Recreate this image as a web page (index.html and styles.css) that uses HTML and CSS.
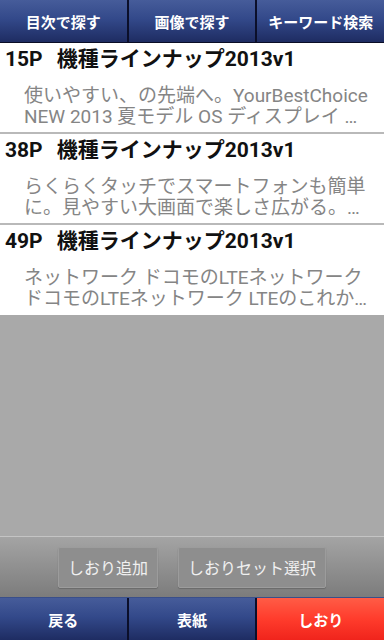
FILE: index.html
```html
<!DOCTYPE html>
<html lang="ja">
<head>
<meta charset="utf-8">
<link rel="stylesheet" href="styles.css">
</head>
<body>
<div class="screen">
  <nav class="topbar">
    <div class="tab">目次で探す</div>
    <div class="tab">画像で探す</div>
    <div class="tab">キーワード検索</div>
  </nav>
  <ul class="list">
    <li class="item">
      <div class="title"><span class="page">15P</span>機種ラインナップ2013v1</div>
      <div class="desc"><span class="line">使いやすい、の先端へ。YourBestChoice</span><span class="line">NEW 2013 夏モデル OS ディスプレイ …</span></div>
    </li>
    <li class="item">
      <div class="title"><span class="page">38P</span>機種ラインナップ2013v1</div>
      <div class="desc"><span class="line">らくらくタッチでスマートフォンも簡単</span><span class="line">に。見やすい大画面で楽しさ広がる。…</span></div>
    </li>
    <li class="item">
      <div class="title"><span class="page">49P</span>機種ラインナップ2013v1</div>
      <div class="desc"><span class="line">ネットワーク ドコモのLTEネットワーク</span><span class="line">ドコモのLTEネットワーク LTEのこれか…</span></div>
    </li>
  </ul>
  <div class="filler"></div>
  <div class="actions">
    <button class="act">しおり追加</button>
    <button class="act">しおりセット選択</button>
  </div>
  <nav class="bottombar">
    <div class="tab">戻る</div>
    <div class="tab">表紙</div>
    <div class="tab active">しおり</div>
  </nav>
</div>
</body>
</html>
```
FILE: styles.css
```css
* { box-sizing: border-box; }
html, body { margin: 0; padding: 0; }
body {
  width: 384px;
  height: 640px;
  overflow: hidden;
  font-family: Roboto, "Noto Sans CJK JP", sans-serif;
  background: #a9a9a9;
}
.screen {
  display: flex;
  flex-direction: column;
  height: 640px;
}
.topbar, .bottombar {
  display: flex;
  background: #0b0f2a;
  gap: 2px;
}
.topbar { height: 43px; border-bottom: 1px solid #0a0d26; }
.bottombar { height: 43px; border-top: 1px solid #3a4f8a; }
.tab {
  flex: 1;
  display: flex;
  align-items: center;
  justify-content: center;
  color: #fff;
  font-weight: bold;
  font-size: 15px;
  background: linear-gradient(#465c9a 0%, #33498a 45%, #1e2c62 100%);
}
.tab.active {
  background: linear-gradient(#ff5c46 0%, #ff3c2c 50%, #f0241c 100%);
}
.list {
  list-style: none;
  margin: 0;
  padding: 0;
  background: #fff;
}
.item {
  border-bottom: 2px solid #b9b9b9;
  padding: 1px 0 5px 5px;
}
.item:last-child { border-bottom: none; padding-bottom: 6px; }
.title {
  font-size: 21px;
  font-weight: bold;
  color: #111;
  line-height: 30px;
  white-space: nowrap;
}
.page { margin-right: 14px; }
.desc {
  font-size: 19px;
  color: #858585;
  line-height: 21px;
  padding: 11px 0 0 19px;
  white-space: nowrap;
  overflow: hidden;
}
.line { display: block; }
.filler { flex: 1; background: #a9a9a9; }
.actions {
  height: 61px;
  display: flex;
  justify-content: center;
  align-items: center;
  gap: 20px;
  border-top: 1px solid #c4c4c4;
  background: linear-gradient(#a4a4a4, #7c7c7c);
}
.act {
  height: 41px;
  padding: 0 9px;
  font-family: inherit;
  font-size: 16px;
  color: #f0f0f0;
  background: #8e8e8e;
  border: 1px solid #9c9c9c;
  border-radius: 2px;
  box-shadow: 0 1px 1px #6a6a6a;
}
```
